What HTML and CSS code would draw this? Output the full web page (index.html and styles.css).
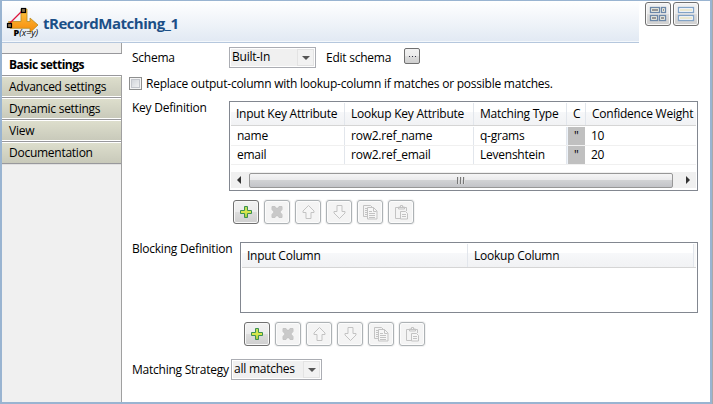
FILE: index.html
```html
<!DOCTYPE html>
<html lang="en">
<head>
<meta charset="utf-8">
<title>tRecordMatching_1</title>
<link rel="stylesheet" href="styles.css">
</head>
<body>
<svg width="0" height="0" class="defs">
  <defs>
    <linearGradient id="orange" x1="0" y1="0" x2="0" y2="1"><stop offset="0" stop-color="#ffc440"/><stop offset="1" stop-color="#f58a0a"/></linearGradient>
    <linearGradient id="green" x1="0" y1="0" x2="0" y2="1"><stop offset="0" stop-color="#b5dc5a"/><stop offset=".5" stop-color="#dce84c"/><stop offset="1" stop-color="#9cc93c"/></linearGradient>
    <symbol id="add" viewBox="0 0 16 16"><path d="M6.500 2.500h3v4h4v3h-4v4h-3v-4h-4v-3h4z" fill="url(#green)" stroke="#3d9150"/></symbol>
    <symbol id="remove" viewBox="0 0 16 16"><path d="M3 2.500h3l2 2.500 2-2.500h3v3l-2.200 2.500 2.200 2.500v3h-3l-2-2.500-2 2.500h-3v-3l2.200-2.500-2.200-2.500z" fill="#c9c9c9" stroke="#c4c4c4"/></symbol>
    <symbol id="up" viewBox="0 0 16 16"><path d="M8.500 1.500l5.500 5.500v1.500h-3v6h-5v-6h-3v-1.500z" fill="#f6f6f6" stroke="#c3c3c3"/></symbol>
    <symbol id="down" viewBox="0 0 16 16"><path d="M8.500 14.500l5.500-5.500v-1.500h-3v-6h-5v6h-3v1.500z" fill="#f6f6f6" stroke="#c3c3c3"/></symbol>
    <symbol id="copy" viewBox="0 0 16 16"><path d="M5 12.500H1.500v-11h7l2 2" fill="none" stroke="#c3c3c3"/><path d="M3 4.500h2M3 6.500h2M3 8.500h2M3 10.500h2" stroke="#c3c3c3"/><path d="M5.500 3.500h6l3.500 3.500v8h-9.500z" fill="#f6f6f6" stroke="#c3c3c3"/><path d="M11.500 3.500v4h3M7 7.500h3M7 9.500h6M7 11.500h6M7 13.500h6" fill="none" stroke="#c3c3c3"/></symbol>
    <symbol id="paste" viewBox="0 0 16 16"><path d="M7 14.500H2.500v-11h11V7M5.500 5v-2h2v-1.500h2v1.500h2v2z" fill="none" stroke="#c3c3c3"/><path d="M7.500 7.500h5l2 2v5.500h-7z" fill="#f6f6f6" stroke="#c3c3c3"/><path d="M9 10.500h4M9 12.500h4" stroke="#c3c3c3"/></symbol>
  </defs>
</svg>
<div class="window">
  <header class="header">
    <div class="banner">
      <svg class="logo" width="36" height="38" viewBox="0 0 36 38">
        <path d="M3.500 20.500h12.500V8h6v12.500h3V17l8 7-8 7.500v-4.200H5z" fill="url(#orange)" stroke="#b98a1e" stroke-width=".8"/>
        <path d="M5 22L18 9" stroke="#dc143c" stroke-width="1.300"/>
        <rect x="2.500" y="22.500" width="4" height="4" fill="#8a7350" stroke="#000" stroke-width="1.200"/>
        <rect x="16.500" y="7.500" width="4" height="4" fill="#8a7350" stroke="#000" stroke-width="1.200"/>
        <text x="8.500" y="35" textLength="24.500" lengthAdjust="spacingAndGlyphs" class="logo-text"><tspan class="heavy">P</tspan><tspan class="slant">(x=y)</tspan></text>
      </svg>
      <h1>tRecordMatching_1</h1>
    </div>
    <div class="views">
      <button class="btn"><svg width="18" height="16" viewBox="0 0 18 16"><g fill="#f3f2e4" stroke="#6b87a8" stroke-width="1.300"><rect x="1.500" y="1.500" width="9" height="5"/><rect x="12.500" y="1.500" width="4" height="5"/><rect x="1.500" y="9.500" width="7" height="5"/><rect x="10.500" y="9.500" width="6" height="5"/></g><path d="M3 4h6M14 4h1M3 12h4M12 12h3" stroke="#969696" stroke-width="2"/></svg></button>
      <button class="btn"><svg width="18" height="16" viewBox="0 0 18 16"><g fill="#fff" stroke="#82a3c6" stroke-width="1.300"><rect x="1.500" y="1.500" width="15" height="5"/><rect x="1.500" y="9.500" width="15" height="5"/></g><path d="M3 4h12M3 12h12" stroke="#ebe8cf" stroke-width="2"/></svg></button>
    </div>
  </header>
  <div class="body">
    <nav class="tabs">
      <div class="tab active"><span>Basic settings</span></div>
      <div class="tab"><span>Advanced settings</span></div>
      <div class="tab"><span>Dynamic settings</span></div>
      <div class="tab"><span>View</span></div>
      <div class="tab"><span>Documentation</span></div>
    </nav>
    <main class="form">
      <div class="row schema">
        <label class="name">Schema</label>
        <div class="select built"><span>Built-In</span><i></i></div>
        <label class="edit">Edit schema</label>
        <button class="dots"><b></b><b></b><b></b></button>
      </div>
      <div class="row replace"><span class="check"></span><label>Replace output-column with lookup-column if matches or possible matches.</label></div>
      <div class="row keys">
        <label class="name">Key Definition</label>
        <div class="table">
          <div class="cols head"><span>Input Key Attribute</span><span>Lookup Key Attribute</span><span>Matching Type</span><span>C</span><span>Confidence Weight</span></div>
          <div class="cols data"><span>name</span><span>row2.ref_name</span><span>q-grams</span><span class="quote">"</span><span>10</span></div>
          <div class="cols data"><span>email</span><span>row2.ref_email</span><span>Levenshtein</span><span class="quote">"</span><span>20</span></div>
          <div class="scroll"><i class="left"></i><div class="thumb"><b></b><b></b><b></b></div><i class="right"></i></div>
        </div>
      </div>
      <div class="tools first">
        <button class="btn"><svg><use href="#add"/></svg></button>
        <button class="btn off"><svg><use href="#remove"/></svg></button>
        <button class="btn off"><svg><use href="#up"/></svg></button>
        <button class="btn off"><svg><use href="#down"/></svg></button>
        <button class="btn off"><svg><use href="#copy"/></svg></button>
        <button class="btn off"><svg><use href="#paste"/></svg></button>
      </div>
      <div class="row blocks">
        <label class="name">Blocking Definition</label>
        <div class="table">
          <div class="cols head"><span>Input Column</span><span>Lookup Column</span><span></span></div>
        </div>
      </div>
      <div class="tools second">
        <button class="btn"><svg><use href="#add"/></svg></button>
        <button class="btn off"><svg><use href="#remove"/></svg></button>
        <button class="btn off"><svg><use href="#up"/></svg></button>
        <button class="btn off"><svg><use href="#down"/></svg></button>
        <button class="btn off"><svg><use href="#copy"/></svg></button>
        <button class="btn off"><svg><use href="#paste"/></svg></button>
      </div>
      <div class="row strategy">
        <label class="name">Matching Strategy</label>
        <div class="select"><span>all matches</span><i></i></div>
      </div>
    </main>
  </div>
</div>
</body>
</html>
```
FILE: styles.css
```css
* { box-sizing: border-box; }
body { margin: 0; width: 713px; height: 404px; overflow: hidden; background: #a9a9a9; font: 12px/16px "Open Sans", "Noto Sans", sans-serif; letter-spacing: -0.24px; color: #000; white-space: nowrap; }
.defs { display: block; height: 0; }
button { padding: 0; font: inherit; }
.window { width: 712px; height: 404px; border: solid #99b4d1; border-width: 1px 2px 2px; background: #fff; display: flex; flex-direction: column; }
.header { height: 42px; flex: none; display: flex; }
.banner { width: 637px; height: 42px; display: flex; background: linear-gradient(#fff, #e1e9f3); border-bottom: 1px solid #b5c7dd; box-shadow: inset 0 -1px #f4f8fc; }
.logo { margin-left: 3px; flex: none; }
.logo-text { font-family: "Open Sans", sans-serif; font-size: 8.500px; letter-spacing: 0; }
.heavy { font-weight: 800; }
.slant { font-style: italic; }
h1 { margin: 10px 0 0 2px; font-size: 15px; line-height: 24px; font-weight: 700; letter-spacing: -0.47px; color: #1b4f87; }
.views { display: flex; gap: 2px; margin: 1px 0 0 6px; }
.btn { width: 26px; height: 24px; flex: none; border: 1px solid #707070; border-radius: 3px; background: linear-gradient(#f2f2f2, #ebebeb 50%, #dddddd 50%, #cfcfcf); box-shadow: inset 0 0 0 1px #f8f8f8; display: flex; align-items: center; justify-content: center; }
.btn svg { display: block; flex: none; }
.body { flex: 1; display: flex; min-height: 0; }
.tabs { width: 120px; flex: none; background: #f0f0f0; border-right: 1px solid #a0a0a0; padding-top: 10px; }
.tab { height: 22px; border-top: 1px solid #98989c; box-shadow: inset 0 1px #fff, inset 0 -1px #fff; background: linear-gradient(#dedfcd, #c8c9ba); padding: 3px 0 0 7px; line-height: 16px; letter-spacing: -0.26px; }
.tab.active { background: #fff; width: 120px; font-weight: 700; letter-spacing: -0.5px; }
.tab:last-child { height: 23px; border-bottom: 1px solid #98989c; box-shadow: inset 0 1px #fff, 0 1px #e0e0e0; }
.form { flex: 1; min-width: 0; padding: 4px 0 0 7px; }
.row { display: flex; align-items: flex-start; }
.name { width: 100px; padding-left: 3px; flex: none; }
.schema { height: 30px; }
.schema .name { padding-top: 3px; }
.select { width: 91px; height: 21px; border: 1px solid #abadb3; background: #f0f0f0; box-shadow: inset 0 0 0 1px #fff; display: flex; align-items: center; justify-content: space-between; padding: 0 1px 0 2px; }
.select span { margin-top: -1px; }
.select.built { width: 87px; }
.select i { width: 17px; height: 17px; border: 1px solid #e3e3e3; background: #f2f2f2; display: grid; place-items: center; }
.select i::before { content: ""; border: solid transparent; border-width: 4px 4px 0; border-top-color: #555; }
.edit { margin: 3px 0 0 10px; width: 78px; }
.dots { width: 16px; height: 16px; margin-top: 1px; border: 1px solid #707070; border-radius: 2px; background: linear-gradient(#f2f2f2, #ebebeb 50%, #ddd 50%, #cfcfcf); display: flex; justify-content: center; align-items: center; gap: 2px; }
.dots b { width: 1px; height: 1px; background: #334; }
.replace { height: 24px; }
.check { width: 13px; height: 13px; border: 1px solid #8e8f8f; background: linear-gradient(135deg, #cbcfd5, #f7f7f7); box-shadow: inset 0 0 0 1px #f4f4f4, inset 0 0 0 2px #c3c6cc; }
.replace label { margin: -1px 0 0 4px; }
.table { border: 1px solid #828790; background: #fff; padding: 1px; }
.keys .name, .blocks .name { margin-top: -1px; }
.keys .table { width: 469px; height: 90px; }
.cols { display: grid; grid-template-columns: 114px 129px 93px 19px 110px; }
.head { height: 23px; background: linear-gradient(#fff 40%, #f7f8fa 40%, #f1f2f4); border-bottom: 1px solid #d5d5d5; line-height: 21px; }
.cols span { padding-left: 6px; border-right: 1px solid #e2e6ec; overflow: hidden; }
.cols.head span:first-child, .data span:last-child { padding-left: 5px; }
.cols span:last-child { border-right: 0; }
.data { height: 19px; border-bottom: 1px solid #f0f0f0; line-height: 18px; }
.data:nth-child(2) { height: 20px; padding-top: 1px; }
.cols .quote { background: #c0c0c0; border-left: 1px solid #edf3fa; border-right: 1px solid #fff; }
.scroll { height: 16px; margin-top: 7px; background: #f0f0f0; display: flex; align-items: center; padding-left: 6px; }
.scroll i { border: solid transparent; border-width: 4px 0; }
.scroll .left { border-right: 4px solid #333; }
.scroll .right { border-left: 4px solid #333; margin-left: 13px; }
.thumb { width: 424px; height: 15px; margin-left: 8px; border: 1px solid #979797; border-radius: 2px; background: linear-gradient(#f5f5f5, #e9e9eb 50%, #d1d2d4 50%, #c3c4c8); display: flex; align-items: center; justify-content: center; gap: 1px; }
.thumb b { width: 2px; height: 7px; background: #777; border-right: 1px solid #ddd; }
.tools { display: flex; gap: 5px; }
.tools svg { width: 16px; height: 16px; }
.tools .off { border-color: #adb2b5; background: #f4f4f4; box-shadow: inset 0 0 0 1px #fcfcfc, 0 0 0 1px #f3f3f3; }
.first { margin: 9px 0 0 104px; }
.blocks { margin-top: 18px; }
.blocks .name { width: 111px; }
.blocks .table { width: 458px; height: 71px; }
.blocks .cols { grid-template-columns: 226px 226px 2px; height: 24px; line-height: 23px; }
.blocks .head span:nth-child(3) { background: #f8f8f8; padding: 0; }
.second { margin: 9px 0 0 115px; }
.strategy { margin-top: 13px; }
.strategy .name { width: 102px; padding-top: 3px; }
```
